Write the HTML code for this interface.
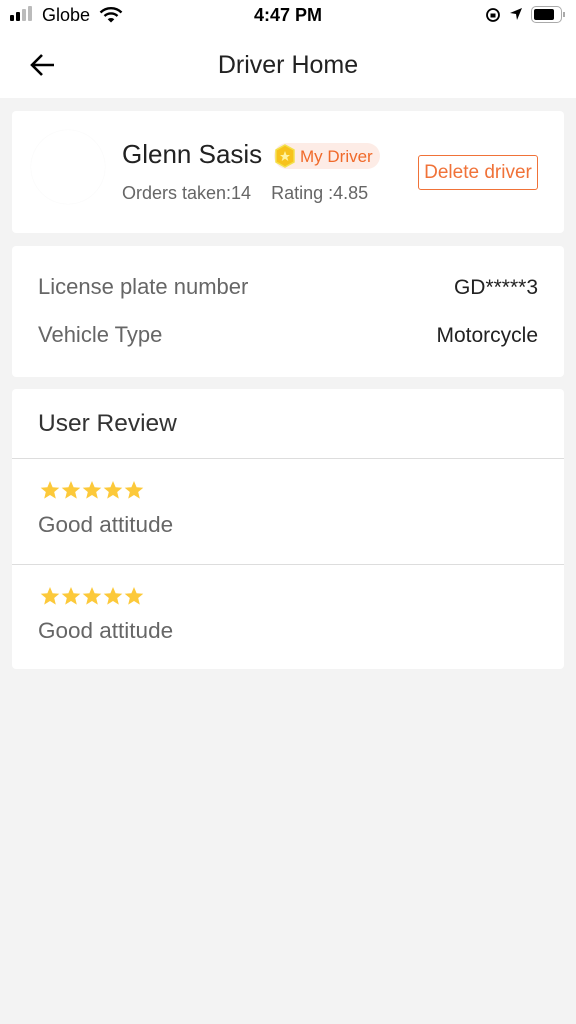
<!DOCTYPE html>
<html><head><meta charset="utf-8"><style>
*{margin:0;padding:0;box-sizing:border-box}
body{width:576px;height:1024px;background:#f3f3f3;font-family:"Liberation Sans",sans-serif;position:relative;overflow:hidden}
.abs{position:absolute}
.top{position:absolute;left:0;top:0;width:576px;height:98px;background:#fff}
.card{position:absolute;left:12px;width:552px;background:#fff;border-radius:4px}
</style></head><body>
<div class="top">
 <div class="abs" style="left:10px;top:15px;width:4px;height:6px;background:#000;border-radius:1px"></div>
 <div class="abs" style="left:16px;top:12px;width:4px;height:9px;background:#000;border-radius:1px"></div>
 <div class="abs" style="left:22px;top:9px;width:4px;height:12px;background:#bbb;border-radius:1px"></div>
 <div class="abs" style="left:28px;top:6px;width:4px;height:15px;background:#bbb;border-radius:1px"></div>
 <div class="abs" style="left:42px;top:5px;font-size:18px;color:#000">Globe</div>
 <svg class="abs" style="left:99px;top:7px" width="24" height="16" viewBox="0 0 24 16"><path d="M1.5 5.5 A15 15 0 0 1 22.5 5.5" stroke="#000" stroke-width="2.4" fill="none"/><path d="M5.5 9 A9.5 9.5 0 0 1 18.5 9" stroke="#000" stroke-width="2.4" fill="none"/><path d="M12 15.5 L8.7 12.3 A5 5 0 0 1 15.3 12.3 Z" fill="#000"/></svg>
 <div class="abs" style="left:0;width:576px;text-align:center;top:5px;font-size:18px;font-weight:bold">4:47 PM</div>
 <svg class="abs" style="left:485px;top:7px" width="16" height="16" viewBox="0 0 16 16"><circle cx="8" cy="8" r="6" stroke="#000" stroke-width="1.8" fill="none"/><rect x="5.5" y="6.5" width="5" height="4" fill="#000"/></svg>
 <svg class="abs" style="left:509px;top:7px" width="14" height="14" viewBox="0 0 14 14"><path d="M13 1 L1 6 L7 7 L8 13 Z" fill="#000"/></svg>
 <div class="abs" style="left:531px;top:6px;width:31px;height:17px;border:1.5px solid #aaa;border-radius:5px"></div>
 <div class="abs" style="left:534px;top:9px;width:20px;height:11px;background:#000;border-radius:2px"></div>
 <div class="abs" style="left:563px;top:12px;width:2px;height:5px;background:#aaa"></div>
 <svg class="abs" style="left:28px;top:52px" width="30" height="26" viewBox="0 0 30 26"><path d="M26 13 H4 M14 3 L4 13 L14 23" stroke="#000" stroke-width="2.6" fill="none"/></svg>
 <div class="abs" style="left:0;width:576px;text-align:center;top:51px;font-size:25px;color:#222">Driver Home</div>
</div>

<div class="card" style="top:111px;height:122px">
 <div class="abs" style="left:19px;top:19px;width:74px;height:74px;border-radius:50%;background:#fff;box-shadow:0 0 1px #eee"></div>
 <div class="abs" style="left:110px;top:28px;font-size:26px;color:#222">Glenn Sasis</div>
 <div class="abs" style="left:262px;top:32px;width:106px;height:26px;background:#fdece6;border-radius:13px"></div>
 <svg class="abs" style="left:263px;top:33px" width="20" height="24" viewBox="0 0 20 24"><path d="M10 1 L19 6 V18 L10 23 L1 18 V6 Z" fill="#f7c21c" stroke="#f3e04a" stroke-width="1.5"/><path d="M10 7 L11.5 11 L15 11 L12.2 13.3 L13.3 17 L10 14.8 L6.7 17 L7.8 13.3 L5 11 L8.5 11 Z" fill="#fff3a0"/></svg>
 <div class="abs" style="left:288px;top:36px;font-size:17px;color:#f06a2a">My Driver</div>
 <div class="abs" style="left:110px;top:72px;font-size:18px;color:#666">Orders taken:14&nbsp;&nbsp;&nbsp;&nbsp;Rating :4.85</div>
 <div class="abs" style="left:406px;top:44px;width:120px;height:35px;border:1.5px solid #f07238;border-radius:3px;color:#f07238;font-size:19px;text-align:center;line-height:34px;white-space:nowrap">Delete driver</div>
</div>

<div class="card" style="top:246px;height:131px">
 <div class="abs" style="left:26px;top:28px;font-size:22px;color:#666">License plate number</div>
 <div class="abs" style="right:26px;top:30px;font-size:21px;color:#222">GD*****3</div>
 <div class="abs" style="left:26px;top:76px;font-size:22px;color:#666">Vehicle Type</div>
 <div class="abs" style="right:26px;top:78px;font-size:21px;color:#222">Motorcycle</div>
</div>

<div class="card" style="top:389px;height:280px">
 <div class="abs" style="left:26px;top:21px;font-size:24.5px;color:#333">User Review</div>
 <div class="abs" style="left:0;top:69px;width:552px;height:1px;background:#ddd"></div>
 <div class="abs" style="left:0;top:175px;width:552px;height:1px;background:#ddd"></div>
 <div class="abs" style="left:26px;top:123px;font-size:22.5px;color:#666">Good attitude</div>
 <div class="abs" style="left:26px;top:229px;font-size:22.5px;color:#666">Good attitude</div>
</div>
<svg class="abs" style="left:38px;top:480px" width="110" height="22" viewBox="0 0 110 22"><defs><path id="s" d="M10 1 L12.6 7.2 L19.3 7.7 L14.2 12 L15.8 18.6 L10 15 L4.2 18.6 L5.8 12 L0.7 7.7 L7.4 7.2 Z" fill="#fcc93a"/></defs><use href="#s" x="2"/><use href="#s" x="23"/><use href="#s" x="44"/><use href="#s" x="65"/><use href="#s" x="86"/></svg>
<svg class="abs" style="left:38px;top:586px" width="110" height="22" viewBox="0 0 110 22"><use href="#s" x="2"/><use href="#s" x="23"/><use href="#s" x="44"/><use href="#s" x="65"/><use href="#s" x="86"/></svg>
</body></html>
